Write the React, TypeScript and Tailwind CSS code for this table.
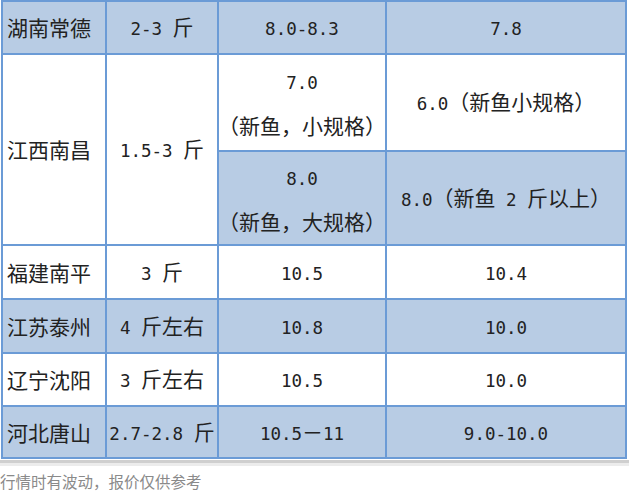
import React from "react";

function T({ s }: { s: string }) {
  const parts = s.split(/([\x20-\x7e]+)/).filter((p) => p.length > 0);
  return (
    <span className="whitespace-pre">
      {parts.map((p, i) =>
        /^[\x20-\x7e]+$/.test(p) ? (
          <span key={i} className="font-['DejaVu_Sans_Mono',monospace] text-[17.5px]">
            {p}
          </span>
        ) : (
          <span key={i}>{p}</span>
        )
      )}
    </span>
  );
}

const BLUE = "bg-[#b8cce4]";
const WHITE = "bg-white";

function Cell({
  children,
  blue,
  left,
  span,
}: {
  children: React.ReactNode;
  blue?: boolean;
  left?: boolean;
  span?: boolean;
}) {
  return (
    <div
      className={`${blue ? BLUE : WHITE} ${span ? "row-span-2" : ""} flex items-center ${
        left ? "justify-start pl-[4px]" : "justify-center"
      } whitespace-nowrap`}
    >
      {children}
    </div>
  );
}

export default function App() {
  const rows: [string, string, string, string, boolean][] = [
    ["福建南平", "3 斤", "10.5", "10.4", false],
    ["江苏泰州", "4 斤左右", "10.8", "10.0", true],
    ["辽宁沈阳", "3 斤左右", "10.5", "10.0", false],
    ["河北唐山", "2.7-2.8 斤", "10.5－11", "9.0-10.0", true],
  ];
  return (
    <div className="w-[629px] h-[500px] bg-white overflow-hidden font-['Noto_Sans_CJK_SC',sans-serif] text-[21px] text-[#222] leading-none">
      <div className="pl-[1px]">
        <div className="grid w-[626px] grid-cols-[102px_110px_166px_238px] grid-rows-[51px_95px_92px_52px_52px_51px_50px] gap-[2px] p-[2px] bg-[#6b9bd6]">
          <Cell blue left>
            <T s="湖南常德" />
          </Cell>
          <Cell blue>
            <T s="2-3 斤" />
          </Cell>
          <Cell blue>
            <T s="8.0-8.3" />
          </Cell>
          <Cell blue>
            <T s="7.8" />
          </Cell>

          <Cell left span>
            <T s="江西南昌" />
          </Cell>
          <Cell span>
            <T s="1.5-3 斤" />
          </Cell>
          <div className={`${WHITE} flex flex-col items-center justify-center leading-[42px] whitespace-nowrap`}>
            <div>
              <T s="7.0" />
            </div>
            <div>
              <T s="（新鱼，小规格）" />
            </div>
          </div>
          <Cell>
            <T s="6.0（新鱼小规格）" />
          </Cell>
          <div className={`${BLUE} flex flex-col items-center justify-center leading-[42px] whitespace-nowrap`}>
            <div>
              <T s="8.0" />
            </div>
            <div>
              <T s="（新鱼，大规格）" />
            </div>
          </div>
          <Cell blue>
            <T s="8.0（新鱼 2 斤以上）" />
          </Cell>

          {rows.map(([a, b, c, d, blue]) => (
            <React.Fragment key={a}>
              <Cell blue={blue} left>
                <T s={a} />
              </Cell>
              <Cell blue={blue}>
                <T s={b} />
              </Cell>
              <Cell blue={blue}>
                <T s={c} />
              </Cell>
              <Cell blue={blue}>
                <T s={d} />
              </Cell>
            </React.Fragment>
          ))}
        </div>
      </div>
      <div className="mt-[1px] h-[3px] bg-[#cfcfcf]" />
      <div className="h-[3px] bg-[#ececec]" />
      <div className="mt-[5px] text-[15.5px] text-[#8a8a8a] leading-[20px] whitespace-nowrap">
        行情时有波动，报价仅供参考
      </div>
    </div>
  );
}
